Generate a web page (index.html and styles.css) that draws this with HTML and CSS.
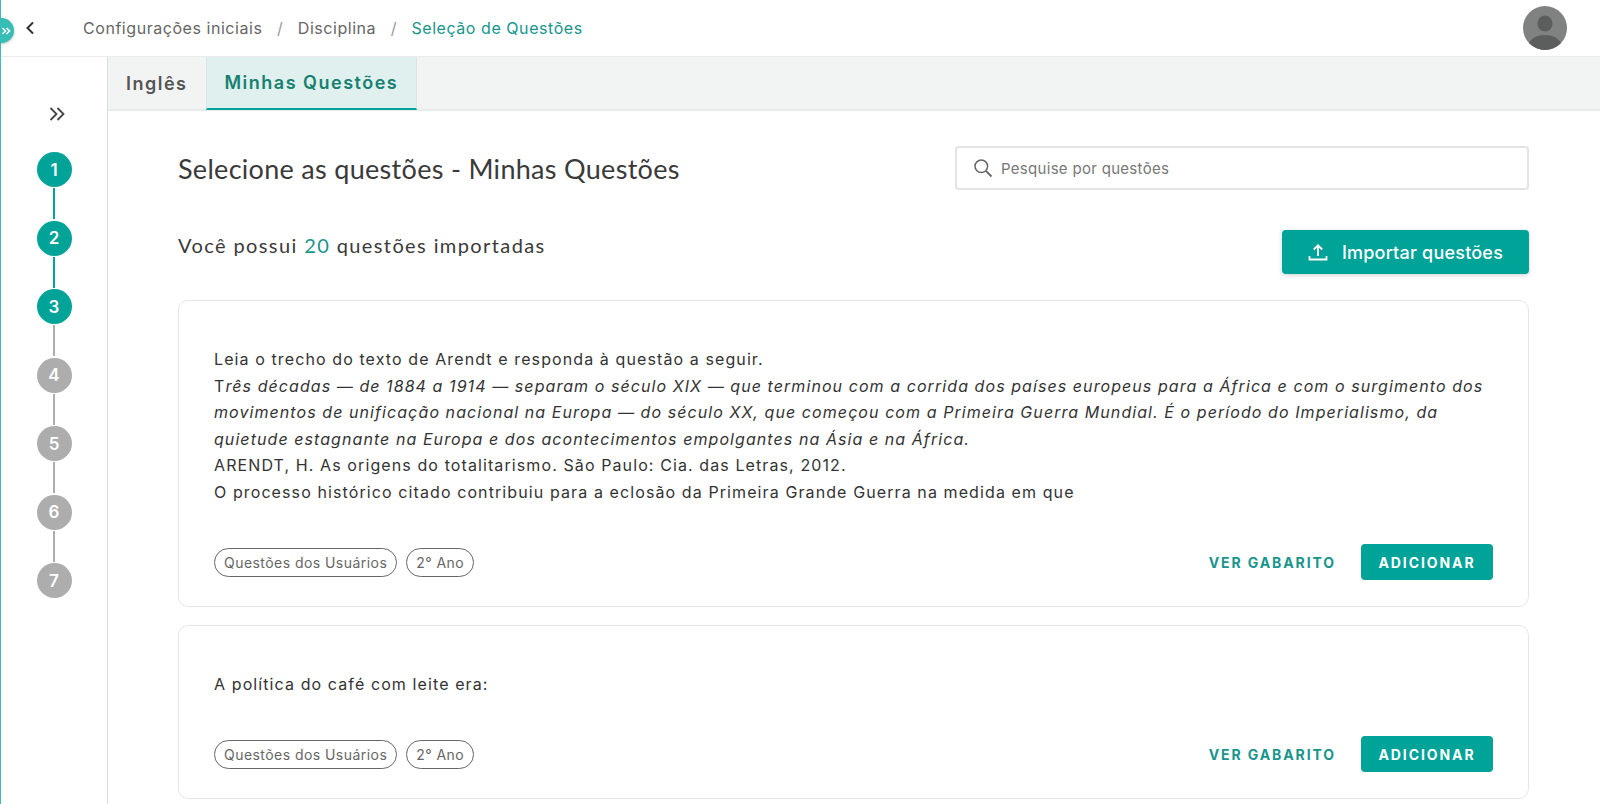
FILE: index.html
```html
<!DOCTYPE html>
<html lang="pt-BR">
<head>
<meta charset="utf-8">
<title>Seleção de Questões</title>
<link rel="stylesheet" href="styles.css">
</head>
<body>
<div class="app">
  <button class="drawer-toggle" aria-label="Expandir">
    <svg viewBox="0 0 12 12" width="12" height="12"><path d="M2.5 3l3 3-3 3M6.5 3l3 3-3 3" fill="none" stroke="#fff" stroke-width="1.6"/></svg>
  </button>
  <header class="topbar">
    <svg class="back" viewBox="0 0 10 14" width="10" height="14"><path d="M8 1.5L2.5 7 8 12.5" fill="none" stroke="#333" stroke-width="2"/></svg>
    <nav class="crumbs">
      <span>Configurações iniciais</span><i>/</i><span>Disciplina</span><i>/</i><span class="current">Seleção de Questões</span>
    </nav>
    <svg class="avatar" viewBox="0 0 44 44" width="44" height="44">
      <defs><clipPath id="av"><circle cx="22" cy="22" r="22"/></clipPath></defs>
      <g clip-path="url(#av)"><rect width="44" height="44" fill="#808281"/><ellipse cx="22" cy="17.500" rx="7.500" ry="8" fill="#5c5e5d"/><ellipse cx="22" cy="40" rx="16.500" ry="11" fill="#5c5e5d"/></g>
    </svg>
  </header>
  <div class="body">
    <aside class="stepper">
      <svg class="expand" viewBox="0 0 16 14" width="16" height="14"><path d="M1.500 1l6 6-6 6M8.500 1l6 6-6 6" fill="none" stroke="#444" stroke-width="1.800"/></svg>
      <ol class="steps">
        <li class="step done">1</li>
        <li class="step done">2</li>
        <li class="step done">3</li>
        <li class="step">4</li>
        <li class="step">5</li>
        <li class="step">6</li>
        <li class="step last">7</li>
      </ol>
    </aside>
    <main class="main">
      <div class="tabs">
        <div class="tab">Inglês</div>
        <div class="tab active">Minhas Questões</div>
      </div>
      <div class="content">
        <div class="title-row">
          <h1>Selecione as questões - Minhas Questões</h1>
          <label class="search">
            <svg viewBox="0 0 20 20" width="20" height="20"><circle cx="8.300" cy="8.300" r="6.300" fill="none" stroke="#666" stroke-width="1.500"/><path d="M13 13l5.500 5.500" stroke="#666" stroke-width="1.800" fill="none"/></svg>
            <span>Pesquise por questões</span>
          </label>
        </div>
        <div class="count-row">
          <p class="count">Você possui <b>20</b> questões importadas</p>
          <button class="import">
            <svg viewBox="0 0 20 20" width="20" height="20"><path d="M10 14V3.500M5.800 7.500L10 3.300l4.200 4.200M1.500 14v3.500h17V14" fill="none" stroke="#fff" stroke-width="1.800"/></svg>
            Importar questões
          </button>
        </div>
        <article class="card">
          <div class="text">
            <p>Leia o trecho do texto de Arendt e responda à questão a seguir.</p>
            <p>T<em>rês décadas — de 1884 a 1914 — separam o século XIX — que terminou com a corrida dos países europeus para a África e com o surgimento dos movimentos de unificação nacional na Europa — do século XX, que começou com a Primeira Guerra Mundial. É o período do Imperialismo, da quietude estagnante na Europa e dos acontecimentos empolgantes na Ásia e na África.</em></p>
            <p>ARENDT, H. As origens do totalitarismo. São Paulo: Cia. das Letras, 2012.</p>
            <p>O processo histórico citado contribuiu para a eclosão da Primeira Grande Guerra na medida em que</p>
          </div>
          <div class="card-foot">
            <span class="chip">Questões dos Usuários</span><span class="chip">2° Ano</span>
            <a class="link">VER GABARITO</a><button class="add">ADICIONAR</button>
          </div>
        </article>
        <article class="card">
          <div class="text"><p>A política do café com leite era:</p></div>
          <div class="card-foot">
            <span class="chip">Questões dos Usuários</span><span class="chip">2° Ano</span>
            <a class="link">VER GABARITO</a><button class="add">ADICIONAR</button>
          </div>
        </article>
      </div>
    </main>
  </div>
</div>
</body>
</html>
```
FILE: styles.css
```css
* { box-sizing: border-box; }
html, body { margin: 0; height: 100%; overflow: hidden; background: #fff; }
body { font-family: "Inter", "Roboto", sans-serif; color: #333; }
.app { position: relative; height: 804px; border-left: 1px solid #3dbfb8; display: flex; flex-direction: column; }
.drawer-toggle { position: absolute; left: -12px; top: 18px; width: 25px; height: 25px; border: 0; padding: 0 2px 0 0; border-radius: 50%; background: #35bdb6; display: flex; align-items: center; justify-content: flex-end; box-shadow: 0 1px 3px rgba(0,0,0,.25); }
.topbar { height: 57px; flex: none; display: flex; align-items: center; border-bottom: 1px solid #ececec; padding: 0 33px 0 24px; }
.back { flex: none; }
.crumbs { margin-left: 48px; font-size: 16px; color: #666; display: flex; align-items: center; font-family: "Inter", sans-serif; letter-spacing: .55px; }
.crumbs i { font-style: normal; color: #999; margin: 0 14.500px; }
.current { color: #17958d; }
.avatar { margin-left: auto; }
.body { flex: 1; display: flex; min-height: 0; }
.stepper { width: 107px; flex: none; border-right: 1px solid #ddd; display: flex; flex-direction: column; align-items: center; padding-top: 50px; }
.expand { flex: none; margin-left: 5px; }
.steps { list-style: none; margin: 31px 0 0; padding: 0; display: flex; flex-direction: column; gap: 33.500px; }
.step { position: relative; width: 35px; height: 35px; border-radius: 50%; background: #adadad; color: #fff; font-weight: 600; font-size: 17px; display: flex; align-items: center; justify-content: center; }
.step::after { content: ""; position: absolute; left: 16.500px; top: 36px; width: 2px; height: 31px; background: #adadad; }
.step.last::after { display: none; }
.step.done { background: #00a398; }
.step.done::after { background: #00a398; }
.step:nth-child(3)::after { background: #adadad; }
.main { flex: 1; min-width: 0; display: flex; flex-direction: column; }
.tabs { height: 54px; flex: none; display: flex; background: #f2f4f3; border-bottom: 2px solid #e8eaea; }
.tab { padding: 0 18px; height: 53px; font-size: 18px; font-weight: 600; letter-spacing: 1.500px; color: #555; display: flex; align-items: center; font-family: "Inter", sans-serif; }
.tab.active { background: #e0f0ef; color: #17806f; border-bottom: 2px solid #00a398; border-left: 1px solid #d9e6e5; border-right: 1px solid #d9e6e5; }
.content { flex: 1; padding: 35px 71px 0 70px; min-height: 0; }
.title-row { display: flex; justify-content: space-between; align-items: center; height: 44px; }
h1 { margin: 0; font-weight: 400; font-size: 27px; font-family: "Lato", sans-serif; color: #3a3a3a; letter-spacing: .3px; }
.search { width: 574px; height: 44px; border: 2px solid #e3e3e3; border-radius: 4px; display: flex; align-items: center; padding-left: 16px; gap: 8px; font-size: 15px; color: #777; font-family: "Inter", sans-serif; letter-spacing: .3px; }
.count-row { display: flex; justify-content: space-between; align-items: flex-start; margin-top: 40px; height: 70px; }
.count { margin: 0; font-size: 20px; letter-spacing: 1.400px; font-family: "Lato", sans-serif; padding-top: 3px; color: #3a3a3a; }
.count b { font-weight: 400; color: #17958d; }
.import { width: 247px; height: 44px; border: 0; border-radius: 4px; background: #00a398; color: #fff; font-size: 18px; font-weight: 500; font-family: "Inter", sans-serif; letter-spacing: .2px; display: flex; align-items: center; justify-content: center; gap: 14px; box-shadow: 0 1px 4px rgba(0,0,0,.2); }
.card { border: 1px solid #e6e6e6; border-radius: 10px; padding: 45px 36px 25.500px 35px; margin-bottom: 18px; }
.text { font-size: 16px; line-height: 26.500px; color: #333; font-family: "Inter", sans-serif; letter-spacing: 1.100px; }
.text em { letter-spacing: 1.070px; }
.text p { margin: 0; }
.card-foot { display: flex; align-items: center; margin-top: 39px; margin-right: -1px; }
.chip { height: 29px; border: 1px solid #666; border-radius: 15px; padding: 0 9px; font-size: 14px; color: #666; display: flex; align-items: center; margin-right: 9px; font-family: "Inter", sans-serif; letter-spacing: .45px; }
.link { margin-left: auto; font-size: 14px; font-weight: 700; color: #17958d; letter-spacing: 1.900px; font-family: "Inter", sans-serif; }
.add { margin-left: 25px; width: 132px; height: 36px; border: 0; border-radius: 4px; background: #00a398; color: #fff; font-size: 14px; font-weight: 700; letter-spacing: 1.900px; font-family: "Inter", sans-serif; }
```
